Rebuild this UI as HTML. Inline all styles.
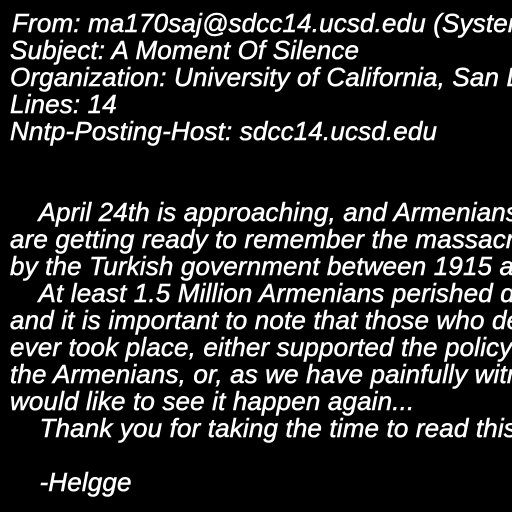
<!DOCTYPE html>
<html><head><meta charset="utf-8"><style>
html,body{margin:0;padding:0;background:#000;width:512px;height:512px;overflow:hidden}
pre{margin:0;position:absolute;left:10px;top:10px;width:502px;height:502px;overflow:hidden;color:#fff;font:italic 26px/27px "Liberation Sans",Arial,sans-serif;letter-spacing:0.15px;-webkit-text-stroke:0.5px #fff;white-space:pre}
</style></head><body><pre><span style="margin-left:2px">From: ma170saj@sdcc14.ucsd.edu (System Operator)</span>
Subject: A Moment Of Silence
Organization: University of California, San Diego
Lines: 14
Nntp-Posting-Host: sdcc14.ucsd.edu


    April 24th is approaching, and Armenians around the world
are getting ready to remember the massacres of their family members
by the Turkish government between 1915 and 1920.
    At least 1.5 Million Armenians perished during that period
and it is important to note that those who deny that this event
ever took place, either supported the policy of exterminating
the Armenians, or, as we have painfully witnessed in Azerbaijan,
would like to see it happen again...
    Thank you for taking the time to read this post.

    -Helgge</pre></body></html>
